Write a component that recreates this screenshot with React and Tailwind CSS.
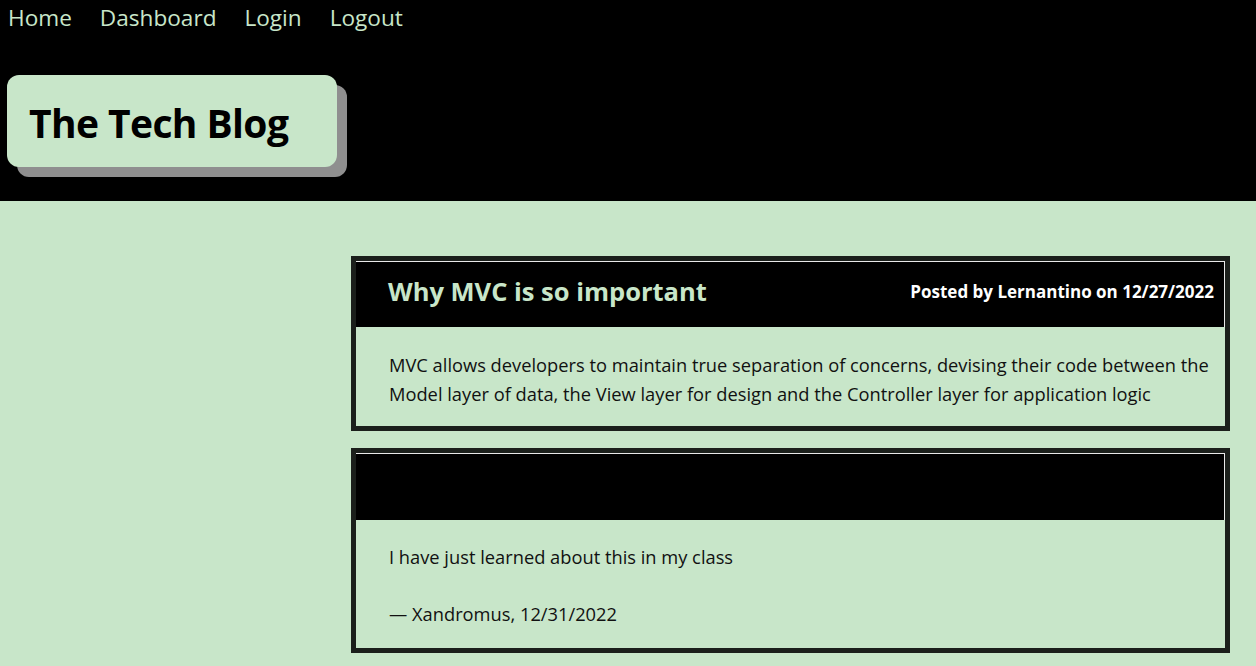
export default function App() {
  const font = { fontFamily: '"Open Sans", "Noto Sans", sans-serif' };
  return (
    <div className="min-h-[666px] bg-[#c8e6c9]" style={font}>
      <header className="bg-black h-[201px] flex flex-col">
        <nav className="flex gap-[28px] px-[8px] pt-[2px] text-[22.6px] leading-[32px] text-[#c8e6c9]">
          <a>Home</a>
          <a>Dashboard</a>
          <a>Login</a>
          <a>Logout</a>
        </nav>
        <div className="mt-[41px] ml-[7px] w-[330px] h-[92px] rounded-[12px] bg-[#c8e6c9] shadow-[10px_10px_0_#8f8f8f] flex items-center pl-[22px]">
          <h1 className="text-[39px] font-bold text-black leading-none tracking-[-0.6px] mt-[2px]">The Tech Blog</h1>
        </div>
      </header>
      <main className="flex pt-[55px] pb-[14px]">
        <div className="w-[351px] shrink-0" />
        <div className="w-[879px] flex flex-col gap-[17px]">
          <article className="border-[5px] border-[#1b1f1b]">
            <div className="bg-black border-t border-r border-[#e8e8e8] h-[66px] flex items-center justify-between pl-[32px] pr-[10px] pb-[6px]">
              <h2 className="text-[25.5px] font-bold text-[#c8e6c9] leading-none">Why MVC is so important</h2>
              <span className="text-[17px] font-bold text-white leading-none">Posted by Lernantino on 12/27/2022</span>
            </div>
            <div className="pl-[33px] pr-[8px] pt-[23px] pb-[18px] text-[18.3px] leading-[29px] text-[#111]">
              MVC allows developers to maintain true separation of concerns, devising their code between the Model layer of data, the View layer for design and the Controller layer for application logic
            </div>
          </article>
          <article className="border-[5px] border-[#1b1f1b]">
            <div className="bg-black border-t border-r border-[#e8e8e8] h-[67px]" />
            <div className="pl-[33px] pr-[8px] pt-[22px] pb-[20px] text-[18.3px] leading-[29px] text-[#111]">
              <p>I have just learned about this in my class</p>
              <p className="mt-[28px]">— Xandromus, 12/31/2022</p>
            </div>
          </article>
        </div>
      </main>
    </div>
  );
}
